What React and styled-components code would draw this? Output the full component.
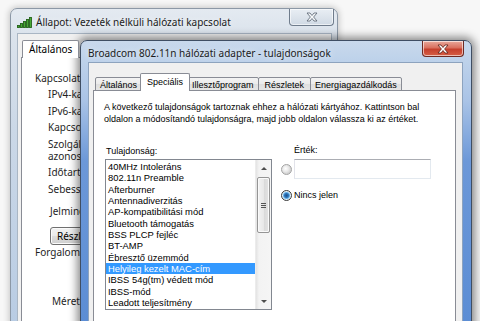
import React from "react";
import styled, { createGlobalStyle } from "styled-components";

const GlobalStyle = createGlobalStyle`
  html, body {
    margin: 0;
    padding: 0;
    background: #f7f7f7;
    overflow: hidden;
  }
`;

const Desktop = styled.div`
  position: relative;
  width: 480px;
  height: 321px;
  overflow: hidden;
  background: #f7f7f7;
`;

// windows on the desktop are the only absolutely placed things
const Window = styled.div`
  position: absolute;
  left: ${(p) => p.x}px;
  top: ${(p) => p.y}px;
  width: ${(p) => p.w}px;
  height: ${(p) => p.h}px;
  box-sizing: border-box;
  display: flex;
  flex-direction: column;
  padding: ${(p) => (p.active ? "0 8px 0 7px" : "0 5px 0 6px")};
  border: 1px solid ${(p) => (p.active ? "#3f4e63" : "#8c98a6")};
  border-radius: 7px 7px 0 0;
  background: ${(p) =>
    p.active
      ? "linear-gradient(180deg, #c9d9ec 0px, #bcd1ea 22px, #a9c3e6 60px, #6c98d8 120px, #5a8cd4 100%)"
      : "linear-gradient(180deg, #e4eaf1 0px, #dbe3ec 26px, #cbd8e7 120px, #b7cbe3 100%)"};
  box-shadow: ${(p) =>
    p.active
      ? "0 0 9px 3px rgba(0, 0, 0, 0.45)"
      : "0 0 6px 1px rgba(0, 0, 0, 0.2)"};
`;

const TitleBar = styled.div`
  display: flex;
  align-items: flex-start;
  height: ${(p) => p.h}px;
  flex-shrink: 0;
`;

const TitleIcon = styled.div`
  flex-shrink: 0;
  width: 16px;
  height: 100%;
  display: flex;
  align-items: center;
  margin-right: 3px;
  padding-top: 2px;
  box-sizing: border-box;
`;

const TitleText = styled.div`
  flex: 1;
  min-width: 0;
  display: flex;
  align-items: center;
  height: 100%;
  font-family: "Noto Sans", sans-serif;
  font-size: 10px;
  color: #1b1b1b;
  white-space: nowrap;
  padding-top: ${(p) => p.pt || 0}px;
  box-sizing: border-box;
  text-shadow: 0 0 6px rgba(255, 255, 255, 0.9);
`;

const CloseBtn = styled.div`
  flex-shrink: 0;
  width: ${(p) => (p.active ? 42 : 45)}px;
  height: ${(p) => (p.active ? 16 : 17)}px;
  margin-right: ${(p) => (p.active ? -1 : -2)}px;
  box-sizing: border-box;
  display: flex;
  align-items: center;
  justify-content: center;
  border: 1px solid ${(p) => (p.active ? "#6e2a22" : "#6f7c8c")};
  border-top: none;
  border-radius: 0 0 4px 4px;
  background: ${(p) =>
    p.active
      ? "linear-gradient(180deg, #e9a99c 0%, #d9705f 45%, #c5402d 55%, #d65e45 100%)"
      : "linear-gradient(180deg, #e9eef4 0%, #dde4ec 50%, #cfd9e4 100%)"};
  box-shadow: inset 0 0 0 1px rgba(255, 255, 255, 0.6);
`;

const Client = styled.div`
  flex: 1;
  display: flex;
  flex-direction: column;
  background: #f0f0f0;
  border: 1px solid ${(p) => (p.active ? "#8da3be" : "#a9b6c4")};
  border-bottom: none;
  padding: ${(p) => (p.active ? "10px 6px 0 4px" : "6px 3px 0 3px")};
`;

const TabStrip = styled.div`
  display: flex;
  align-items: flex-end;
  margin-left: ${(p) => p.ml || 0}px;
  margin-bottom: -1px;
  position: relative;
  z-index: 1;
`;

const Tab = styled.div`
  box-sizing: border-box;
  height: ${(p) => (p.selected ? 18 : 14)}px;
  padding: ${(p) => (p.selected ? "2px 6px 0" : `1px ${p.pad || 4}px 0`)};
  margin: ${(p) => (p.selected ? "0 -2px" : "0")};
  margin-left: ${(p) => (p.first ? 0 : p.selected ? -2 : -1)}px;
  border: 1px solid #898c95;
  border-bottom: ${(p) => (p.selected ? "none" : "1px solid #898c95")};
  border-radius: 2px 2px 0 0;
  background: ${(p) =>
    p.selected
      ? "#ffffff"
      : "linear-gradient(180deg, #f3f3f3 0%, #ebebeb 50%, #dedede 51%, #e6e6e6 100%)"};
  font-family: ${(p) =>
    p.segoe ? '"Noto Sans", sans-serif' : '"Liberation Sans", Arial, sans-serif'};
  font-size: ${(p) => (p.segoe ? 10 : 9)}px;
  line-height: 12px;
  color: #000;
  white-space: nowrap;
  position: relative;
  z-index: ${(p) => (p.selected ? 2 : 1)};
`;

const TabPanel = styled.div`
  flex: 1;
  background: #ffffff;
  border: 1px solid #898c95;
  border-bottom: none;
  padding: ${(p) => (p.active ? "10px 10px 0 10px" : "0")};
  display: flex;
  flex-direction: column;
`;

/* ---------- back window (Állapot) ---------- */

const StatusLabel = styled.div`
  margin-top: ${(p) => p.gap || 0}px;
  padding-left: ${(p) => p.indent || 0}px;
  font-family: "Noto Sans", sans-serif;
  font-size: 10px;
  line-height: 12px;
  color: #1e1e1e;
  white-space: nowrap;
`;

const PushButton = styled.div`
  margin-top: ${(p) => p.gap || 0}px;
  margin-left: ${(p) => p.indent || 0}px;
  width: 70px;
  height: 18px;
  box-sizing: border-box;
  border: 1px solid #707070;
  border-radius: 3px;
  background: linear-gradient(180deg, #f2f2f2 0%, #ebebeb 48%, #dddddd 52%, #cfcfcf 100%);
  box-shadow: inset 0 0 0 1px #fbfbfb;
  font-family: "Noto Sans", sans-serif;
  font-size: 10px;
  line-height: 16px;
  padding-left: 6px;
  color: #000;
  white-space: nowrap;
`;

/* ---------- front window (tulajdonságok) ---------- */

const DialogText = styled.div`
  font-family: "Liberation Sans", Arial, sans-serif;
  font-size: 9px;
  line-height: 12px;
  color: #000;
  white-space: nowrap;
  margin-top: ${(p) => p.gap || 0}px;
  padding-left: ${(p) => p.indent || 0}px;
`;

const Columns = styled.div`
  display: flex;
  align-items: flex-start;
  margin-top: 20px;
`;

const PropColumn = styled.div`
  display: flex;
  flex-direction: column;
  margin-left: 1px;
`;

const ValueColumn = styled.div`
  display: flex;
  flex-direction: column;
  margin-left: 9px;
  margin-top: -1px;
`;

const ListBox = styled.div`
  margin-top: 2px;
  width: 167px;
  height: 151px;
  box-sizing: border-box;
  border: 1px solid #828790;
  display: flex;
  background: #fff;
`;

const ListItems = styled.div`
  flex: 1;
  padding-top: 1px;
  display: flex;
  flex-direction: column;
  overflow: hidden;
`;

const ListItem = styled.div`
  flex-shrink: 0;
  height: 11.33px;
  line-height: 11.33px;
  padding-left: 2px;
  font-family: "Liberation Sans", Arial, sans-serif;
  font-size: 9.4px;
  white-space: nowrap;
  color: ${(p) => (p.selected ? "#ffffff" : "#000000")};
  background: ${(p) => (p.selected ? "#3399ff" : "transparent")};
`;

const ScrollBar = styled.div`
  width: 15px;
  display: flex;
  flex-direction: column;
  background: linear-gradient(90deg, #e3e3e3 0%, #f3f3f3 20%, #f5f5f5 100%);
  border-left: 1px solid #ececec;
`;

const ScrollArrow = styled.div`
  height: 16px;
  display: flex;
  align-items: center;
  justify-content: center;
  &::after {
    content: "";
    border-left: 3px solid transparent;
    border-right: 3px solid transparent;
    ${(p) =>
      p.down
        ? "border-top: 3px solid #4d4d4d;"
        : "border-bottom: 3px solid #4d4d4d;"}
  }
`;

const ScrollSpace = styled.div`
  flex: 1;
`;

const ScrollThumb = styled.div`
  height: 56px;
  margin: 1px 1px 0 1px;
  box-sizing: border-box;
  border: 1px solid #959595;
  border-radius: 2px;
  background: linear-gradient(90deg, #f3f3f3 0%, #e8e8e8 50%, #d9d9d9 51%, #e4e4e4 100%);
  box-shadow: inset 0 0 0 1px #fafafa;
  display: flex;
  align-items: center;
  justify-content: center;
`;

const Grip = styled.div`
  width: 5px;
  height: 5px;
  background: repeating-linear-gradient(180deg, #555 0, #555 1px, transparent 1px, transparent 2px);
`;

const RadioRow = styled.div`
  display: flex;
  align-items: center;
  gap: 2px;
  margin-top: ${(p) => p.gap || 0}px;
`;

const Radio = styled.div`
  width: 11px;
  height: 11px;
  box-sizing: border-box;
  border-radius: 50%;
  border: 1px solid ${(p) => (p.checked ? "#3a3a3a" : "#a3a3a3")};
  background: ${(p) =>
    p.checked
      ? "radial-gradient(circle at 50% 50%, #1f4f86 0, #2d74b9 2px, #62aee6 3px, #dff0fb 4px, #ececec 5px)"
      : "radial-gradient(circle at 40% 40%, #ffffff 0, #e9e9e9 3px, #d4d4d4 5px)"};
  flex-shrink: 0;
`;

const TextBox = styled.div`
  width: 137px;
  height: 20px;
  box-sizing: border-box;
  border: 1px solid #dbdfe6;
  border-top-color: #abadb3;
  border-left-color: #e2e3ea;
  border-right-color: #e3e9ef;
  border-bottom-color: #e3e9ef;
  background: #ffffff;
`;

function WifiIcon() {
  const bars = [2, 4, 6, 8, 10];
  return (
    <svg width="16" height="12" viewBox="0 0 16 12">
      {bars.map((h, i) => (
        <rect
          key={i}
          x={i * 3 + 0.5}
          y={11.5 - h}
          width="2"
          height={h}
          fill="#46a834"
          stroke="#24621a"
          strokeWidth="0.9"
        />
      ))}
    </svg>
  );
}

function CloseGlyph({ active }) {
  return (
    <svg width="12" height="10" viewBox="0 0 12 10">
      <path
        d="M1 1 H4 L6 3.5 L8 1 H11 L7.6 5 L11 9 H8 L6 6.5 L4 9 H1 L4.4 5 Z"
        fill={active ? "#ffffff" : "#f7f9fb"}
        stroke={active ? "#5b1d14" : "#56616f"}
        strokeWidth="0.8"
        strokeLinejoin="round"
      />
    </svg>
  );
}

const properties = [
  "40MHz Intoleráns",
  "802.11n Preamble",
  "Afterburner",
  "Antennadiverzitás",
  "AP-kompatibilitási mód",
  "Bluetooth támogatás",
  "BSS PLCP fejléc",
  "BT-AMP",
  "Ébresztő üzemmód",
  "Helyileg kezelt MAC-cím",
  "IBSS 54g(tm) védett mód",
  "IBSS-mód",
  "Leadott teljesítmény",
];

const tabs = [
  { label: "Általános" },
  { label: "Speciális", selected: true },
  { label: "Illesztőprogram" },
  { label: "Részletek", pad: 6 },
  { label: "Energiagazdálkodás" },
];

function StatusWindow() {
  return (
    <Window x={10} y={8} w={328} h={330}>
      <TitleBar h={24}>
        <TitleIcon>
          <WifiIcon />
        </TitleIcon>
        <TitleText pt={1}>Állapot: Vezeték nélküli hálózati kapcsolat</TitleText>
        <CloseBtn>
          <CloseGlyph />
        </CloseBtn>
      </TitleBar>
      <Client>
        <TabStrip ml={1}>
          <Tab selected first segoe>
            Általános
          </Tab>
        </TabStrip>
        <TabPanel>
          <StatusLabel gap={14} indent={13}>Kapcsolat</StatusLabel>
          <StatusLabel gap={4} indent={26}>IPv4-kapcsolat:</StatusLabel>
          <StatusLabel gap={5} indent={26}>IPv6-kapcsolat:</StatusLabel>
          <StatusLabel gap={4} indent={26}>Kapcsolat állapota:</StatusLabel>
          <StatusLabel gap={5} indent={26}>
            Szolgáltatáskészlet-
            <br />
            azonosító (SSID):
          </StatusLabel>
          <StatusLabel gap={4} indent={26}>Időtartam:</StatusLabel>
          <StatusLabel gap={5} indent={26}>Sebesség:</StatusLabel>
          <StatusLabel gap={10} indent={28}>Jelminőség:</StatusLabel>
          <PushButton gap={10} indent={28}>Részletek...</PushButton>
          <StatusLabel gap={1} indent={13}>Forgalom</StatusLabel>
          <StatusLabel gap={37} indent={30}>Méret:</StatusLabel>
        </TabPanel>
      </Client>
    </Window>
  );
}

function PropertiesWindow() {
  return (
    <Window active x={80} y={40} w={392} h={300}>
      <TitleBar h={21}>
        <TitleText pt={2}>Broadcom 802.11n hálózati adapter - tulajdonságok</TitleText>
        <CloseBtn active>
          <CloseGlyph active />
        </CloseBtn>
      </TitleBar>
      <Client active>
        <TabStrip ml={2}>
          {tabs.map((t, i) => (
            <Tab key={t.label} first={i === 0} selected={t.selected} pad={t.pad}>
              {t.label}
            </Tab>
          ))}
        </TabStrip>
        <TabPanel active>
          <DialogText>
            A következő tulajdonságok tartoznak ehhez a hálózati kártyához. Kattintson bal
          </DialogText>
          <DialogText>
            oldalon a módosítandó tulajdonságra, majd jobb oldalon válassza ki az értéket.
          </DialogText>
          <Columns>
            <PropColumn>
              <DialogText indent={1}>Tulajdonság:</DialogText>
              <ListBox>
                <ListItems>
                  {properties.map((p) => (
                    <ListItem key={p} selected={p === "Helyileg kezelt MAC-cím"}>
                      {p}
                    </ListItem>
                  ))}
                </ListItems>
                <ScrollBar>
                  <ScrollArrow />
                  <ScrollThumb>
                    <Grip />
                  </ScrollThumb>
                  <ScrollSpace />
                  <ScrollArrow down />
                </ScrollBar>
              </ListBox>
            </PropColumn>
            <ValueColumn>
              <DialogText indent={13}>Érték:</DialogText>
              <RadioRow gap={3}>
                <Radio />
                <TextBox />
              </RadioRow>
              <RadioRow gap={10}>
                <Radio checked />
                <DialogText>Nincs jelen</DialogText>
              </RadioRow>
            </ValueColumn>
          </Columns>
        </TabPanel>
      </Client>
    </Window>
  );
}

export default function App() {
  return (
    <Desktop>
      <GlobalStyle />
      <StatusWindow />
      <PropertiesWindow />
    </Desktop>
  );
}
